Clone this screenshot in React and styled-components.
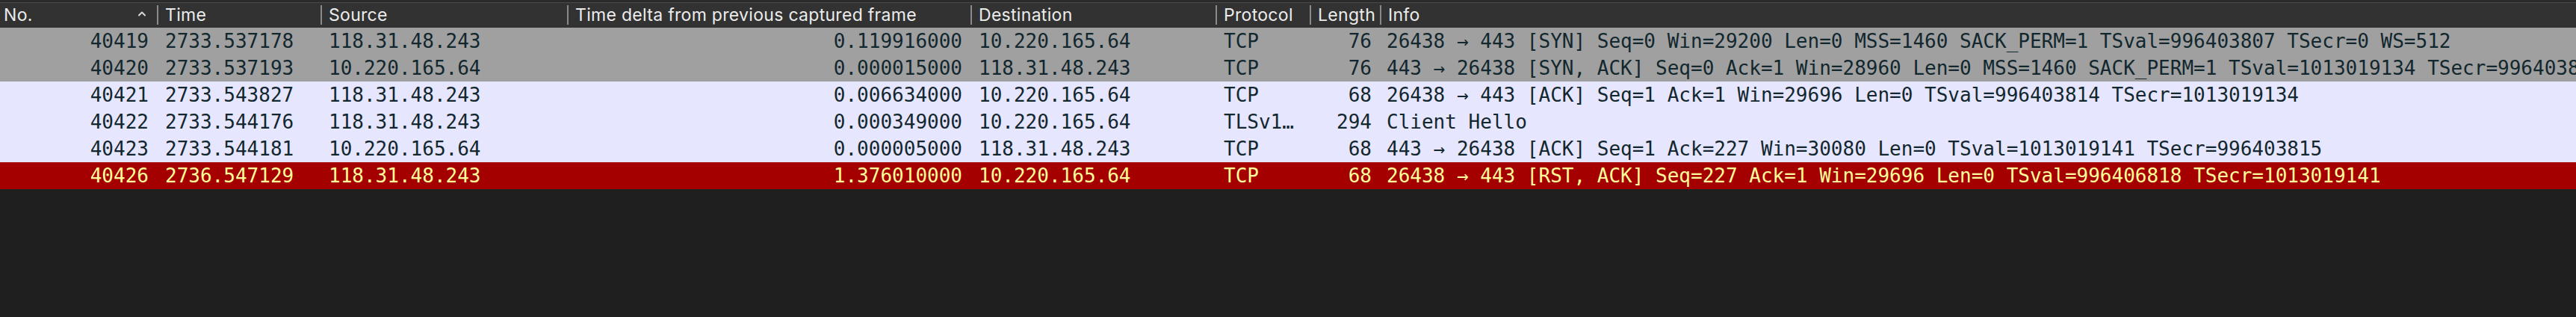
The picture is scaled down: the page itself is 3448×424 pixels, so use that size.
import React from "react";
import styled, { createGlobalStyle } from "styled-components";

const Global = createGlobalStyle`
  html, body { margin: 0; padding: 0; background: #1f1f1f; }
  body { width: 3448px; height: 424px; overflow: hidden; }
  #root { height: 424px; }
`;

const COLS = "210px 219px 330px 540px 328px 126px 94px 1fr";

const Pane = styled.div`
  width: 3448px;
  height: 424px;
  background: #1f1f1f;
  overflow: hidden;
  display: flex;
  flex-direction: column;
`;

const HeaderRow = styled.div`
  display: grid;
  grid-template-columns: ${COLS};
  height: 34px;
  background: #323232;
  border-top: 3px solid #2a2a2a;
  box-shadow: inset 0 1px 0 #4a4a4a;
`;

const HeaderCell = styled.div`
  display: flex;
  align-items: center;
  min-width: 0;
  overflow: hidden;
  padding-left: ${(p) => (p.$first ? "5px" : "0")};
`;

const Divider = styled.span`
  flex: none;
  width: 2px;
  height: 26px;
  background: #8a8a8a;
  margin-right: 9px;
`;

const Label = styled.span`
  flex: 1;
  min-width: 0;
  overflow: hidden;
  white-space: nowrap;
  font-family: Inter, "Liberation Sans", sans-serif;
  font-size: 23px;
  color: #ececec;
  letter-spacing: 0.3px;
`;

const SortMark = styled.svg`
  flex: none;
  margin-right: 14px;
  margin-top: -4px;
`;

const Row = styled.div`
  display: grid;
  grid-template-columns: ${COLS};
  height: 36px;
  align-items: center;
  background: ${(p) => p.$bg};
  color: ${(p) => p.$fg};
  font-family: "DejaVu Sans Mono", "Liberation Mono", monospace;
  font-size: 26px;
  white-space: nowrap;
`;

const Cell = styled.div`
  min-width: 0;
  overflow: hidden;
  text-align: ${(p) => (p.$right ? "right" : "left")};
  padding: ${(p) => (p.$right ? "0 11px 0 0" : "0 0 0 11px")};
`;

const InfoCell = styled.div`
  min-width: 0;
  overflow: hidden;
  padding-left: 9px;
`;

const STYLES = {
  syn: { bg: "#a0a0a0", fg: "#12272e" },
  tcp: { bg: "#e7e6ff", fg: "#12272e" },
  rst: { bg: "#a40000", fg: "#fffc9c" },
};

const packets = [
  ["40419", "2733.537178", "118.31.48.243", "0.119916000", "10.220.165.64", "TCP", "76", "26438 → 443 [SYN] Seq=0 Win=29200 Len=0 MSS=1460 SACK_PERM=1 TSval=996403807 TSecr=0 WS=512", "syn"],
  ["40420", "2733.537193", "10.220.165.64", "0.000015000", "118.31.48.243", "TCP", "76", "443 → 26438 [SYN, ACK] Seq=0 Ack=1 Win=28960 Len=0 MSS=1460 SACK_PERM=1 TSval=1013019134 TSecr=996403807 WS=512", "syn"],
  ["40421", "2733.543827", "118.31.48.243", "0.006634000", "10.220.165.64", "TCP", "68", "26438 → 443 [ACK] Seq=1 Ack=1 Win=29696 Len=0 TSval=996403814 TSecr=1013019134", "tcp"],
  ["40422", "2733.544176", "118.31.48.243", "0.000349000", "10.220.165.64", "TLSv1…", "294", "Client Hello", "tcp"],
  ["40423", "2733.544181", "10.220.165.64", "0.000005000", "118.31.48.243", "TCP", "68", "443 → 26438 [ACK] Seq=1 Ack=227 Win=30080 Len=0 TSval=1013019141 TSecr=996403815", "tcp"],
  ["40426", "2736.547129", "118.31.48.243", "1.376010000", "10.220.165.64", "TCP", "68", "26438 → 443 [RST, ACK] Seq=227 Ack=1 Win=29696 Len=0 TSval=996406818 TSecr=1013019141", "rst"],
];

const headers = ["Time", "Source", "Time delta from previous captured frame", "Destination", "Protocol", "Length", "Info"];

export default function App() {
  return (
    <Pane>
      <Global />
      <HeaderRow>
        <HeaderCell $first>
          <Label>No.</Label>
          <SortMark width="12" height="8" viewBox="0 0 12 8">
            <path d="M2 6.5 L6 2.5 L10 6.5" fill="none" stroke="#d8d8d8" strokeWidth="2" strokeLinecap="round" strokeLinejoin="round" />
          </SortMark>
        </HeaderCell>
        {headers.map((h) => (
          <HeaderCell key={h}>
            <Divider />
            <Label>{h}</Label>
          </HeaderCell>
        ))}
      </HeaderRow>
      {packets.map((p) => {
        const s = STYLES[p[8]];
        return (
          <Row key={p[0]} $bg={s.bg} $fg={s.fg}>
            <Cell $right>{p[0]}</Cell>
            <Cell>{p[1]}</Cell>
            <Cell>{p[2]}</Cell>
            <Cell $right>{p[3]}</Cell>
            <Cell>{p[4]}</Cell>
            <Cell>{p[5]}</Cell>
            <Cell $right>{p[6]}</Cell>
            <InfoCell>{p[7]}</InfoCell>
          </Row>
        );
      })}
    </Pane>
  );
}
